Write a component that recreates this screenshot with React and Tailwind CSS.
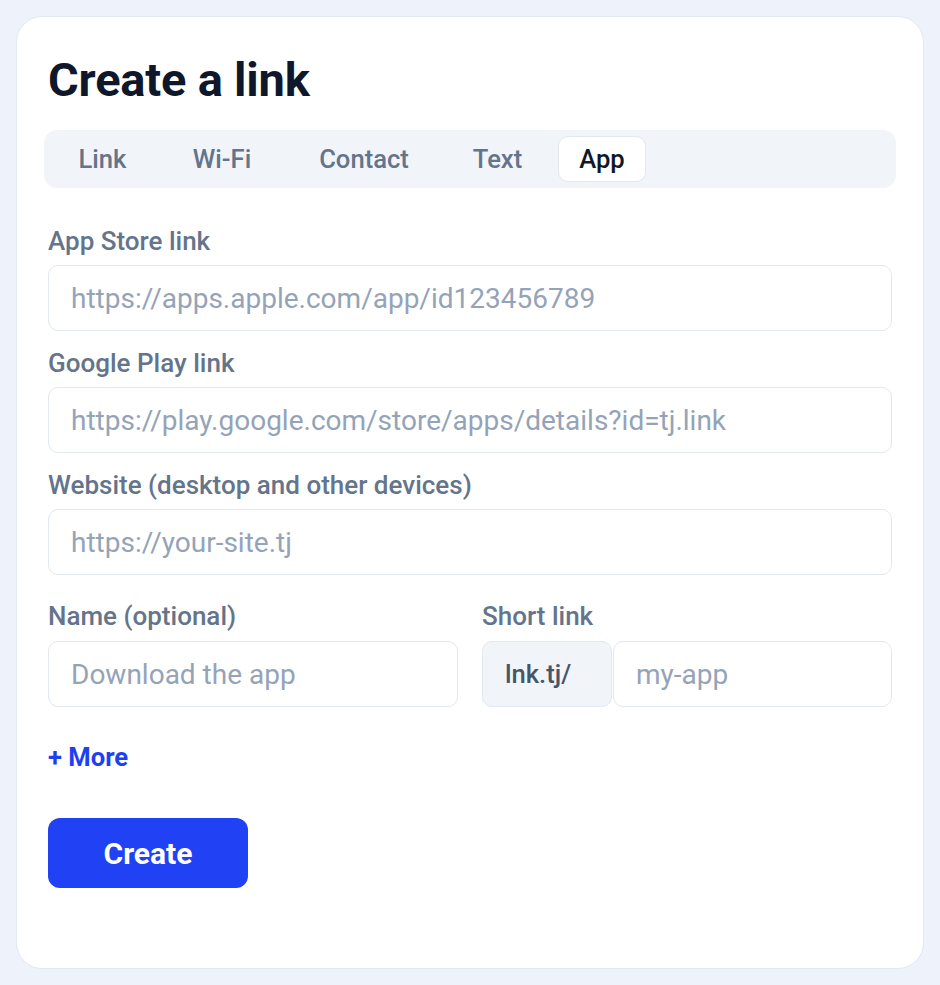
import React from "react";

const font = { fontFamily: "Roboto, 'Noto Sans', sans-serif" };

function Field({ label, placeholder, className = "" }) {
  return (
    <div className={"flex flex-col " + className}>
      <label className="text-[26px] leading-[32px] font-medium text-[#64748b]">{label}</label>
      <input
        placeholder={placeholder}
        className="mt-2 h-[66px] w-full rounded-[10px] border border-[#e2e8f0] bg-white px-[22px] text-[28px] text-[#0f172a] outline-none placeholder:text-[#94a3b8]"
      />
    </div>
  );
}

export default function App() {
  const tabs = [
    { name: "Link", w: "w-[101px]" },
    { name: "Wi-Fi", w: "w-[102px]" },
    { name: "Contact", w: "w-[146px]" },
    { name: "Text", w: "w-[85px]" },
  ];
  return (
    <div className="min-h-screen bg-[#eef2fa] p-4" style={font}>
      <div className="rounded-[26px] border border-[#e2e8f0] bg-white px-[31px] pt-[39px] pb-[80px]">
        <h1 className="text-[47px] leading-[48px] font-bold tracking-[-0.2px] text-[#0f172a]">Create a link</h1>

        <div className="-mx-1 mt-[26px] flex h-[58px] items-center gap-[18px] rounded-[13px] bg-[#f1f5f9] pl-[8px]">
          {tabs.map((t) => (
            <div
              key={t.name}
              className={"flex h-[46px] items-center justify-center text-[25.6px] font-medium text-[#64748b] " + t.w}
            >
              {t.name}
            </div>
          ))}
          <div className="flex h-[46px] w-[88px] items-center justify-center rounded-[10px] border border-[#e2e8f0] bg-white text-[25.6px] font-medium text-[#0f172a]">
            App
          </div>
        </div>

        <Field className="mt-[37px]" label="App Store link" placeholder="https://apps.apple.com/app/id123456789" />
        <Field className="mt-[16px]" label="Google Play link" placeholder="https://play.google.com/store/apps/details?id=tj.link" />
        <Field className="mt-[16px]" label="Website (desktop and other devices)" placeholder="https://your-site.tj" />

        <div className="mt-[25px] grid grid-cols-2 gap-x-6">
          <div className="flex flex-col">
            <label className="text-[26px] leading-[32px] font-medium text-[#64748b]">Name (optional)</label>
            <input
              placeholder="Download the app"
              className="mt-[9px] h-[66px] w-full rounded-[10px] border border-[#e2e8f0] bg-white px-[22px] text-[28px] outline-none placeholder:text-[#94a3b8]"
            />
          </div>
          <div className="flex flex-col">
            <label className="text-[26px] leading-[32px] font-medium text-[#64748b]">Short link</label>
            <div className="mt-[9px] flex h-[66px] gap-px">
              <div className="flex w-[130px] shrink-0 items-center rounded-[10px] border border-[#e2e8f0] bg-[#f1f5f9] px-[22px] text-[25.6px] font-medium text-[#475569]">
                lnk.tj/
              </div>
              <input
                placeholder="my-app"
                className="h-full min-w-0 flex-1 rounded-[10px] border border-[#e2e8f0] bg-white px-[22px] text-[28px] outline-none placeholder:text-[#94a3b8]"
              />
            </div>
          </div>
        </div>

        <div className="mt-[34px] text-[25.6px] leading-[32px] font-bold text-[#1f3ff3]">+ More</div>

        <button className="mt-[45px] flex h-[70px] w-[200px] items-center justify-center rounded-[12px] bg-[#2141f5] text-[30px] font-bold text-white">
          Create
        </button>
      </div>
    </div>
  );
}
